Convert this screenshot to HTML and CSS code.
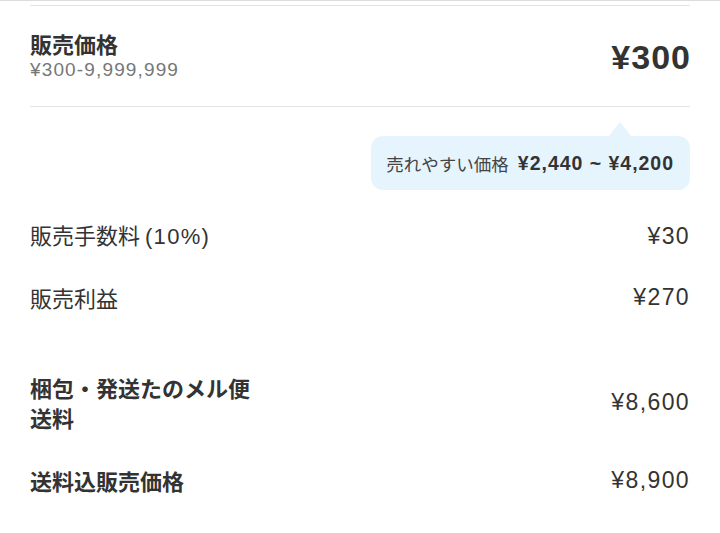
FILE: index.html
```html
<!DOCTYPE html>
<html lang="ja">
<head>
<meta charset="utf-8">
<link rel="stylesheet" href="styles.css">
</head>
<body>
<div class="topline"></div>
<div class="sheet">
  <div class="price-row">
    <div class="price-label">
      <div class="title">販売価格</div>
      <div class="range num">¥300-9,999,999</div>
    </div>
    <div class="price-value num">¥300</div>
  </div>

  <div class="hint-wrap">
    <div class="hint">
      <span class="hint-label">売れやすい価格</span>
      <span class="hint-value num">¥2,440 ~ ¥4,200</span>
    </div>
  </div>

  <div class="row row-first">
    <div class="label">販売手数料 <span class="num">(10%)</span></div>
    <div class="value num">¥30</div>
  </div>
  <div class="row">
    <div class="label">販売利益</div>
    <div class="value num">¥270</div>
  </div>
  <div class="row row-ship">
    <div class="label bold">梱包・発送たのメル便<br>送料</div>
    <div class="value num">¥8,600</div>
  </div>
  <div class="row row-total">
    <div class="label bold">送料込販売価格</div>
    <div class="value num">¥8,900</div>
  </div>
</div>
</body>
</html>
```

FILE: styles.css
```css
* { box-sizing: border-box; }
html, body {
  margin: 0;
  padding: 0;
  background: #fff;
}
body {
  width: 720px;
  font-family: "Noto Sans CJK JP", "Liberation Sans", sans-serif;
  color: #333;
}
.num {
  font-family: "Liberation Sans", "Noto Sans CJK JP", sans-serif;
  letter-spacing: 0.06em;
}
.topline {
  height: 1px;
  background: #dcdcdc;
  margin-bottom: 4px;
}
.sheet {
  padding: 0 30px;
}
.price-row {
  display: flex;
  justify-content: space-between;
  align-items: center;
  border-top: 1px solid #e3e3e3;
  border-bottom: 1px solid #e3e3e3;
  padding: 25px 0 24px;
}
.title {
  font-size: 22px;
  font-weight: 700;
  line-height: 24px;
}
.range {
  font-size: 19px;
  line-height: 24px;
  margin-top: 3px;
  color: #777;
}
.price-value {
  font-size: 34px;
  font-weight: 700;
  line-height: 36px;
  letter-spacing: 0.03em;
  margin-right: -1px;
}
.hint-wrap {
  display: flex;
  justify-content: flex-end;
  padding-top: 29px;
}
.hint {
  position: relative;
  display: flex;
  align-items: center;
  gap: 9px;
  height: 54px;
  padding: 0 16px 0 15px;
  background: #e6f4fd;
  border-radius: 12px;
}
.hint::before {
  content: "";
  position: absolute;
  top: -14px;
  right: 59px;
  border-left: 11px solid transparent;
  border-right: 11px solid transparent;
  border-bottom: 14px solid #e6f4fd;
}
.hint-label {
  font-size: 17.5px;
  color: #444;
}
.hint-value {
  font-size: 19.5px;
  font-weight: 700;
  letter-spacing: 0.05em;
}
.row {
  display: flex;
  justify-content: space-between;
  align-items: center;
  padding: 15px 0;
  font-size: 22px;
  line-height: 30px;
}
.row-first { margin-top: 14px; }
.row-ship { margin-top: 30px; }
.row-total { padding-top: 18px; }
.bold { font-weight: 700; }
.value {
  font-size: 23px;
}
```
